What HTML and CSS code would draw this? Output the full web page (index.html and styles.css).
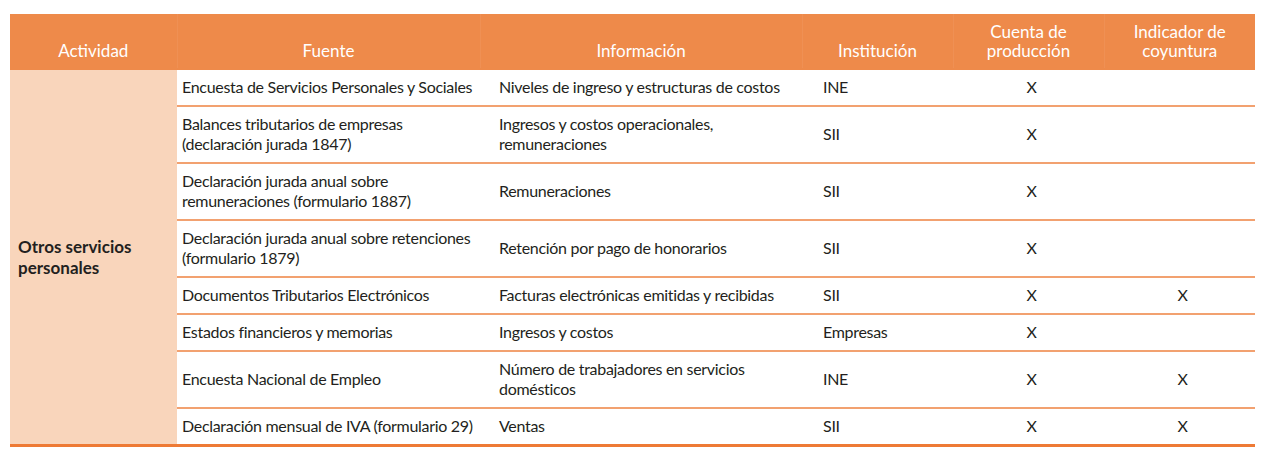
FILE: index.html
```html
<!DOCTYPE html>
<html lang="es">
<head>
<meta charset="utf-8">
<title>Otros servicios personales</title>
<link rel="stylesheet" href="styles.css">
</head>
<body>
<div class="page">
<table class="sources">
  <colgroup>
    <col class="c-act"><col class="c-fuente"><col class="c-info"><col class="c-inst"><col class="c-cuenta"><col class="c-ind">
  </colgroup>
  <thead>
    <tr>
      <th>Actividad</th>
      <th>Fuente</th>
      <th>Información</th>
      <th>Institución</th>
      <th>Cuenta de<br>producción</th>
      <th>Indicador de<br>coyuntura</th>
    </tr>
  </thead>
  <tbody>
    <tr class="first">
      <td class="act" rowspan="8">Otros servicios<br>personales</td>
      <td class="fuente">Encuesta de Servicios Personales y Sociales</td>
      <td class="info">Niveles de ingreso y estructuras de costos</td>
      <td class="inst">INE</td>
      <td class="mark">X</td>
      <td class="mark"></td>
    </tr>
    <tr>
      <td class="fuente">Balances tributarios de empresas<br>(declaración jurada 1847)</td>
      <td class="info">Ingresos y costos operacionales,<br>remuneraciones</td>
      <td class="inst">SII</td>
      <td class="mark">X</td>
      <td class="mark"></td>
    </tr>
    <tr>
      <td class="fuente">Declaración jurada anual sobre<br>remuneraciones (formulario 1887)</td>
      <td class="info">Remuneraciones</td>
      <td class="inst">SII</td>
      <td class="mark">X</td>
      <td class="mark"></td>
    </tr>
    <tr>
      <td class="fuente">Declaración jurada anual sobre retenciones<br>(formulario 1879)</td>
      <td class="info">Retención por pago de honorarios</td>
      <td class="inst">SII</td>
      <td class="mark">X</td>
      <td class="mark"></td>
    </tr>
    <tr>
      <td class="fuente">Documentos Tributarios Electrónicos</td>
      <td class="info">Facturas electrónicas emitidas y recibidas</td>
      <td class="inst">SII</td>
      <td class="mark">X</td>
      <td class="mark">X</td>
    </tr>
    <tr>
      <td class="fuente">Estados financieros y memorias</td>
      <td class="info">Ingresos y costos</td>
      <td class="inst">Empresas</td>
      <td class="mark">X</td>
      <td class="mark"></td>
    </tr>
    <tr>
      <td class="fuente">Encuesta Nacional de Empleo</td>
      <td class="info">Número de trabajadores en servicios<br>domésticos</td>
      <td class="inst">INE</td>
      <td class="mark">X</td>
      <td class="mark">X</td>
    </tr>
    <tr class="last">
      <td class="fuente">Declaración mensual de IVA (formulario 29)</td>
      <td class="info">Ventas</td>
      <td class="inst">SII</td>
      <td class="mark">X</td>
      <td class="mark">X</td>
    </tr>
  </tbody>
</table>
</div>
</body>
</html>
```

FILE: styles.css
```css
html, body {
  margin: 0;
  padding: 0;
  background: #ffffff;
}

.page {
  padding: 14px 0 0 10px;
}

.sources {
  width: 1245px;
  table-layout: fixed;
  border-collapse: collapse;
  font-family: Lato, "Open Sans", sans-serif;
  font-size: 16px;
  letter-spacing: -0.3px;
  line-height: 20px;
  color: #231f20;
}

.c-act { width: 167px; }
.c-fuente { width: 303px; }
.c-info { width: 322px; }
.c-inst { width: 151px; }
.c-cuenta { width: 151px; }
.c-ind { width: 151px; }

.sources th {
  background: #ee8a4a;
  color: #ffffff;
  font-weight: normal;
  font-size: 17px;
  letter-spacing: 0;
  line-height: 19px;
  text-align: center;
  vertical-align: bottom;
  height: 55px;
  padding: 0 4px 8px;
  box-sizing: border-box;
  border-left: 1px solid rgba(255, 255, 255, 0.06);
}

.sources th:first-child {
  border-left: none;
}

.sources td {
  padding: 7px 0 8px;
  border-top: 2px solid #f2a170;
  vertical-align: middle;
  background: #ffffff;
}

.sources tr.first td {
  border-top: 2px solid #ee8a4a;
}

.sources tr.last td {
  border-bottom: 3px solid #ee7a35;
}

.sources td.act {
  background: #f9d5bb;
  font-weight: bold;
  font-size: 17px;
  letter-spacing: 0;
  line-height: 21px;
  padding-left: 8px;
  border-top: none;
  border-bottom: 3px solid #ee7a35;
}

.sources td.fuente {
  padding-left: 5px;
}

.sources td.info {
  padding-left: 19px;
}

.sources td.inst {
  padding-left: 21px;
}

.sources td.mark {
  text-align: center;
  padding-left: 6px;
}
```
